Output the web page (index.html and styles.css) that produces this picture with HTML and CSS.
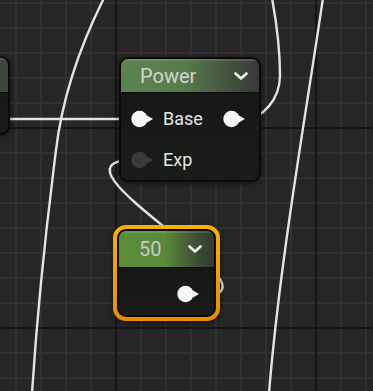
FILE: index.html
```html
<!DOCTYPE html>
<html lang="en">
<head>
    <meta charset="UTF-8">
    <meta name="viewport" content="width=device-width, initial-scale=1.0">
    <title>Material Graph</title>
    <link rel="stylesheet" href="styles.css">
</head>
    <body>
        <div class="graph">
            <!-- wires sit under the nodes -->
            <svg class="wires" width="373" height="391" viewBox="0 0 373 391">
                <path d="M104,-2 C78,50 62,100 56,150 C50,200 40,270 32,393" />
                <path d="M323,-2 C305,120 280,260 269,393" />
                <path d="M244,119 C262,119 280,100 280,75 C280,45 276,20 272,-2" />
                <path d="M8,119 L136,119" />
                <path d="M200,296 C300,296 30,160 134,160" />
            </svg>

            <div class="node node-left">
                <div class="node-header"></div>
                <div class="node-body"></div>
            </div>

            <div class="node node-power">
                <div class="node-header">
                    <span class="node-title">Power</span>
                    <svg class="chevron" width="14" height="8" viewBox="0 0 14 8"><polyline points="1.5,1.5 7,6.5 12.5,1.5" /></svg>
                </div>
                <div class="node-body">
                    <div class="pin-row">
                        <svg class="pin" width="23" height="18" viewBox="0 0 23 18"><circle cx="8.5" cy="9" r="8.2" /><polygon points="16,5.5 22,9 16,12.5" /></svg>
                        <span class="pin-label">Base</span>
                        <svg class="pin pin-out" width="23" height="18" viewBox="0 0 23 18"><circle cx="8.5" cy="9" r="8.2" /><polygon points="16,5.5 22,9 16,12.5" /></svg>
                    </div>
                    <div class="pin-row">
                        <svg class="pin pin-off" width="23" height="18" viewBox="0 0 23 18"><circle cx="8.5" cy="9" r="8.2" /><polygon points="16,5.5 22,9 16,12.5" /></svg>
                        <span class="pin-label">Exp</span>
                    </div>
                </div>
            </div>

            <div class="selected">
                <div class="node node-const">
                    <div class="node-header">
                        <span class="node-title">50</span>
                        <svg class="chevron" width="14" height="8" viewBox="0 0 14 8"><polyline points="1.5,1.5 7,6.5 12.5,1.5" /></svg>
                    </div>
                    <div class="node-body">
                        <svg class="pin pin-out" width="23" height="18" viewBox="0 0 23 18"><circle cx="8.5" cy="9" r="8.2" /><polygon points="16,5.5 22,9 16,12.5" /></svg>
                    </div>
                </div>
            </div>
        </div>
    </body>
</html>
```

FILE: styles.css
```css
* {
    box-sizing: border-box;
}

body {
    margin: 0;
    font-family: Roboto, "Liberation Sans", sans-serif;
    background-color: #262626;
}

.graph {
    position: relative;
    width: 373px;
    height: 391px;
    overflow: hidden;
    background-color: #262626;
    background-image:
        linear-gradient(to right, #151515 2px, transparent 2px),
        linear-gradient(to bottom, #151515 2px, transparent 2px),
        linear-gradient(to right, #313131 2px, transparent 2px),
        linear-gradient(to bottom, #313131 2px, transparent 2px);
    background-size: 200px 200px, 200px 200px, 25px 25px, 25px 25px;
    background-position: 115px 127px, 115px 127px, 15px 2px, 15px 2px;
}

.wires {
    position: absolute;
    left: 0;
    top: 0;
}

    .wires path {
        fill: none;
        stroke: #e4e4e4;
        stroke-width: 2.4;
    }

.node {
    position: absolute;
    display: flex;
    flex-direction: column;
    border: 2px solid #0a0a0a;
    border-radius: 9px;
    overflow: hidden;
    background: linear-gradient(to bottom, #141614, #1a1c1a);
    box-shadow: 0 2px 6px rgba(0,0,0,0.5);
}

.node-header {
    display: flex;
    align-items: center;
    justify-content: space-between;
    flex-shrink: 0;
    border-bottom: 1px solid #0e100e;
    box-shadow: inset 0 2px 0 rgba(255,255,255,0.12);
}

.node-title {
    color: #d4d4d4;
    font-size: 20px;
    line-height: 1;
}

.chevron polyline {
    fill: none;
    stroke: #f2f2f2;
    stroke-width: 2.6;
    stroke-linecap: round;
    stroke-linejoin: round;
}

.pin circle,
.pin polygon {
    fill: #f6f6f6;
}

.pin-off circle,
.pin-off polygon {
    fill: #3a3a3a;
}

.pin-label {
    color: #e6e6e6;
    font-size: 18px;
    margin-left: 9px;
}

.pin-out {
    margin-left: auto;
}

/* node cut off by the left edge */
.node-left {
    left: -100px;
    top: 56px;
    width: 110px;
    height: 79px;
}

    .node-left .node-header {
        height: 35px;
        background: linear-gradient(to right, #4a5a48, #3c463b);
    }

/* Power */
.node-power {
    left: 119px;
    top: 57px;
    width: 142px;
    height: 125px;
}

    .node-power .node-header {
        height: 34px;
        padding: 0 11px 0 19px;
        background: linear-gradient(to right, #5d8351 0%, #587b4c 45%, #44523f 78%, #363b35 100%);
    }

    .node-power .node-body {
        padding: 5px 13px 0 10px;
    }

.pin-row {
    display: flex;
    align-items: center;
    height: 41px;
}

/* selected constant */
.selected {
    position: absolute;
    left: 113px;
    top: 225px;
    width: 107px;
    height: 96px;
    border-radius: 13px;
    background: linear-gradient(to bottom, #f6b200, #e88c00);
    box-shadow: 0 2px 6px rgba(0,0,0,0.5);
}

.node-const {
    left: 4px;
    top: 4px;
    width: 99px;
    height: 88px;
    border-radius: 9px;
    box-shadow: none;
    background: linear-gradient(to bottom, #131313, #1b1b19);
}

    .node-const .node-header {
        height: 37px;
        padding: 0 12px 0 20px;
        background: linear-gradient(to right, #5c8e3b 0%, #5a8a3a 48%, #3e4e36 82%, #323832 100%);
    }

    .node-const .node-title {
        color: #c8c8c8;
    }

    .node-const .node-body {
        display: flex;
        padding: 17px 14px 0 0;
    }
```
